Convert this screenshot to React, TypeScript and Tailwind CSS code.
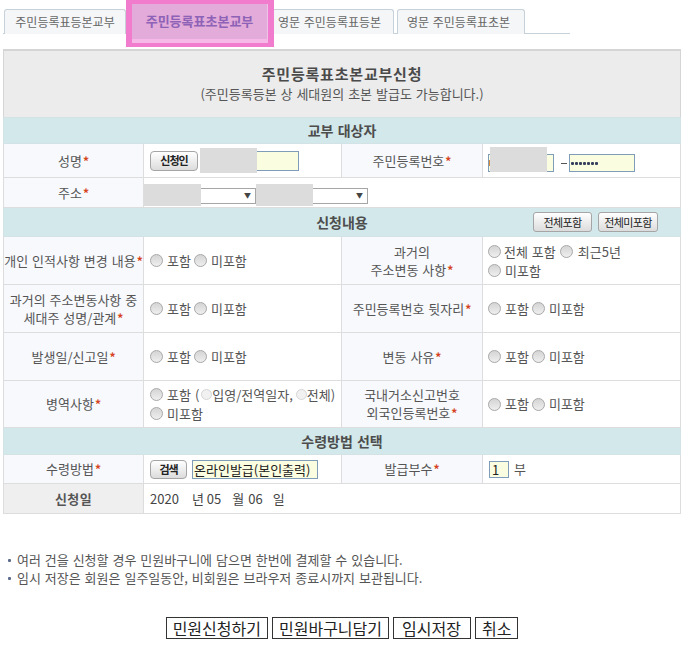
import React from "react";

const font = "font-['Noto_Sans_CJK_KR','Noto_Sans',sans-serif]";

function Star() {
  return <span className="text-[#d6431c] font-bold text-[12px] ml-[1px]">*</span>;
}

function Radio({ className = "" }: { className?: string }) {
  return (
    <span
      className={`inline-block shrink-0 w-[13px] h-[13px] rounded-full border border-[#a9a9a9] bg-gradient-to-b from-[#d4d4d4] to-[#efefef] ${className}`}
    />
  );
}

function SmallRadio({ className = "" }: { className?: string }) {
  return (
    <span
      className={`inline-block shrink-0 w-[11px] h-[11px] rounded-full border border-[#d6d6d6] bg-[#f1f1f1] ${className}`}
    />
  );
}

function Pair() {
  return (
    <div className="flex items-center">
      <Radio />
      <span className="ml-[4px]">포함</span>
      <Radio className="ml-[3px]" />
      <span className="ml-[4px]">미포함</span>
    </div>
  );
}

const labelTd = "bg-[#f7f9fd] text-center border border-[#dddddd] px-0 leading-[18px] whitespace-nowrap";
const val1Td = "bg-white border border-[#dddddd] pl-[6px]";
const val2Td = "bg-white border border-[#dddddd] pl-[5px]";
const secTd = "bg-[#d2e8ea] border border-[#d2e2e5] text-center font-bold text-[14px] text-[#4d4d4d]";
const smallBtn =
  "flex items-center justify-center border border-[#a5a5a5] rounded-[3px] bg-gradient-to-b from-white to-[#dcdcdc] text-[11px] text-[#222]";
const yellowInput = "border border-[#7f9db9] bg-[#fbfde0]";
const bigBtn = "h-[22px] border border-[#333] bg-white text-[16px] text-[#222] leading-[20px]";

export default function App() {
  return (
    <div className={`${font} w-[695px] h-[665px] bg-white text-[13px] text-[#555] [word-spacing:1px] pl-[3px]`}>
      {/* Tabs */}
      <div className="w-[567px] h-[34px] border-b border-[#c6d1d9] flex items-start text-[12px]">
        <div className="mt-[9px] ml-[1px] w-[122px] h-[25px] shrink-0 border border-b-0 border-[#c6d1d9] rounded-t-[3px] bg-[#f5f6f8] flex items-center justify-center text-[#666]">
          주민등록표등본교부
        </div>
        <div className="relative z-10 shrink-0 w-[148px] h-[47px] border-t-[4px] border-b-[4px] border-x-[6px] border-[#f17bcc] flex flex-col">
          <div className="flex-1 bg-[#e2abd9] flex items-center justify-center font-bold text-[13px] text-[#8d62b7] pb-[2px] border-r border-[#eec3e8]">
            주민등록표초본교부
          </div>
          <div className="h-[4px] bg-[#f6b8e7]" />
        </div>
        <div className="mt-[9px] w-[120px] h-[25px] shrink-0 border border-b-0 border-l-0 border-[#c6d1d9] rounded-tr-[3px] bg-[#f5f6f8] flex items-center pl-[4px] text-[#666]">
          영문 주민등록표등본
        </div>
        <div className="mt-[9px] ml-[3px] w-[128px] h-[25px] shrink-0 border border-b-0 border-[#c6d1d9] rounded-t-[3px] bg-[#f5f6f8] flex items-center pl-[9px] text-[#666]">
          영문 주민등록표초본
        </div>
      </div>

      {/* Panel */}
      <div className="mt-[15px] w-[678px]">
        <div className="h-[68px] bg-[#ececec] border-t-2 border-x border-[#d5d5d5] flex flex-col items-center pt-[13px]">
          <div className="text-[15px] font-bold text-[#4a4a4a] tracking-[0.8px] leading-[20px]">주민등록표초본교부신청</div>
          <div className="text-[13px] text-[#555] leading-[18px] mt-[1px]">(주민등록등본 상 세대원의 초본 발급도 가능합니다.)</div>
        </div>
        <table className="w-[678px] table-fixed border-collapse">
          <colgroup>
            <col className="w-[140px]" />
            <col className="w-[198px]" />
            <col className="w-[141px]" />
            <col />
          </colgroup>
          <tbody>
            <tr className="h-[26px]">
              <td colSpan={4} className={secTd}>교부 대상자</td>
            </tr>
            <tr className="h-[34px]">
              <td className={labelTd}>성명<Star /></td>
              <td className={val1Td}>
                <div className="flex items-center">
                  <button className={`${smallBtn} w-[48px] h-[20px] rounded-[4px] font-bold tracking-[-1px]`}>신청인</button>
                  <div className="relative ml-[2px]">
                    <div className={`${yellowInput} w-[99px] h-[20px]`} />
                    <div className="absolute left-0 top-[-3px] w-[57px] h-[25px] bg-[#dcdcdc]" />
                  </div>
                </div>
              </td>
              <td className={labelTd}>주민등록번호<Star /></td>
              <td className={val2Td}>
                <div className="flex items-center pt-[5px]">
                  <div className="relative">
                    <div className={`${yellowInput} w-[66px] h-[18px] flex items-center`}>
                      <span className="w-[2px] h-[6px] bg-[#d98a3a]" />
                    </div>
                    <div className="absolute left-[2px] top-[-7px] w-[57px] h-[25px] bg-[#dcdcdc]" />
                  </div>
                  <span className="ml-[7px] w-[6px] h-[1px] bg-[#555]" />
                  <div className={`${yellowInput} ml-[2px] w-[66px] h-[18px] flex items-center gap-[1px] pl-[1px]`}>
                    {[0, 1, 2, 3, 4, 5, 6].map((i) => (
                      <span key={i} className="w-[3px] h-[3px] rounded-[1px] bg-[#37405e]" />
                    ))}
                  </div>
                </div>
              </td>
            </tr>
            <tr className="h-[30px]">
              <td className={labelTd}>주소<Star /></td>
              <td colSpan={3} className="bg-white border border-[#dddddd] pl-[6px]">
                <div className="flex items-center pt-[6px]">
                  <div className="relative">
                    <div className="w-[106px] h-[16px] border border-[#a6a6a6] bg-white flex items-center justify-end pr-[4px] text-[7px] text-[#444]">▼</div>
                    <div className="absolute left-[-6px] top-[-4px] w-[57px] h-[22px] bg-[#dcdcdc]" />
                  </div>
                  <div className="relative">
                    <div className="w-[112px] h-[16px] border border-[#a6a6a6] bg-white flex items-center justify-end pr-[4px] text-[7px] text-[#444]">▼</div>
                    <div className="absolute left-0 top-[-4px] w-[57px] h-[22px] bg-[#dcdcdc]" />
                  </div>
                </div>
              </td>
            </tr>
            <tr className="h-[29px]">
              <td colSpan={4} className={secTd}>
                <div className="grid grid-cols-[1fr_auto_1fr] items-center">
                  <div />
                  <div>신청내용</div>
                  <div className="flex justify-end gap-[6px] pr-[22px] font-normal">
                    <button className={`${smallBtn} w-[59px] h-[20px] rounded-[2px] tracking-[-0.6px]`}>전체포함</button>
                    <button className={`${smallBtn} w-[60px] h-[20px] rounded-[2px] tracking-[-0.6px]`}>전체미포함</button>
                  </div>
                </div>
              </td>
            </tr>
            <tr className="h-[48px]">
              <td className={labelTd}>개인 인적사항 변경 내용<Star /></td>
              <td className={val1Td}><Pair /></td>
              <td className={labelTd}>과거의<br />주소변동 사항<Star /></td>
              <td className={val2Td}>
                <div className="leading-[19px]">
                  <div className="flex items-center">
                    <Radio />
                    <span className="ml-[3px]">전체 포함</span>
                    <Radio className="ml-[4px]" />
                    <span className="ml-[5px]">최근5년</span>
                  </div>
                  <div className="flex items-center">
                    <Radio />
                    <span className="ml-[4px]">미포함</span>
                  </div>
                </div>
              </td>
            </tr>
            <tr className="h-[48px]">
              <td className={labelTd}>과거의 주소변동사항 중<br />세대주 성명/관계<Star /></td>
              <td className={val1Td}><Pair /></td>
              <td className={labelTd}>주민등록번호 뒷자리<Star /></td>
              <td className={val2Td}><Pair /></td>
            </tr>
            <tr className="h-[48px]">
              <td className={labelTd}>발생일/신고일<Star /></td>
              <td className={val1Td}><Pair /></td>
              <td className={labelTd}>변동 사유<Star /></td>
              <td className={val2Td}><Pair /></td>
            </tr>
            <tr className="h-[47px]">
              <td className={labelTd}>병역사항<Star /></td>
              <td className={val1Td}>
                <div className="leading-[19px]">
                  <div className="flex items-center whitespace-nowrap">
                    <Radio />
                    <span className="ml-[4px]">포함</span>
                    <span className="ml-[4px]">(</span>
                    <SmallRadio className="ml-[2px]" />
                    <span>입영/전역일자,</span>
                    <SmallRadio className="ml-[3px]" />
                    <span>전체)</span>
                  </div>
                  <div className="flex items-center">
                    <Radio />
                    <span className="ml-[4px]">미포함</span>
                  </div>
                </div>
              </td>
              <td className={labelTd}>국내거소신고번호<br />외국인등록번호<Star /></td>
              <td className={val2Td}><Pair /></td>
            </tr>
            <tr className="h-[27px]">
              <td colSpan={4} className={secTd}>수령방법 선택</td>
            </tr>
            <tr className="h-[29px]">
              <td className={labelTd}>수령방법<Star /></td>
              <td className={val1Td}>
                <div className="flex items-center">
                  <button className={`${smallBtn} w-[37px] h-[19px] rounded-[4px] font-bold tracking-[-1px]`}>검색</button>
                  <div className={`${yellowInput} ml-[5px] w-[126px] h-[19px] flex items-center pl-[1px] text-[#222] leading-[17px] [word-spacing:0px]`}>
                    온라인발급(본인출력)
                  </div>
                </div>
              </td>
              <td className={labelTd}>발급부수<Star /></td>
              <td className={val2Td}>
                <div className="flex items-center">
                  <div className={`${yellowInput} ml-[1px] w-[20px] h-[17px] flex items-center pl-[2px] text-[#222] leading-[15px]`}>1</div>
                  <span className="ml-[5px]">부</span>
                </div>
              </td>
            </tr>
            <tr className="h-[30px]">
              <td className="bg-[#efefef] text-center border border-[#dddddd] font-bold text-[13px] text-[#555] tracking-[0.3px]">신청일</td>
              <td colSpan={3} className="bg-white border border-[#dddddd] pl-[6px]">
                <div className="flex items-center text-[#444] [word-spacing:0px]">
                  <span>2020</span>
                  <span className="ml-[13px]">년</span>
                  <span className="ml-[3px]">05</span>
                  <span className="ml-[11px]">월</span>
                  <span className="ml-[4px]">06</span>
                  <span className="ml-[10px]">일</span>
                </div>
              </td>
            </tr>
          </tbody>
        </table>
      </div>

      {/* Notes */}
      <div className="mt-[37px] leading-[18px] text-[#555]">
        <div className="flex items-center">
          <span className="ml-[5px] w-[3px] h-[3px] rounded-[1px] bg-[#5d6b8c]" />
          <span className="ml-[6px]">여러 건을 신청할 경우 민원바구니에 담으면 한번에 결제할 수 있습니다.</span>
        </div>
        <div className="flex items-center">
          <span className="ml-[5px] w-[3px] h-[3px] rounded-[1px] bg-[#5d6b8c]" />
          <span className="ml-[6px]">임시 저장은 회원은 일주일동안, 비회원은 브라우저 종료시까지 보관됩니다.</span>
        </div>
      </div>

      {/* Buttons */}
      <div className="mt-[30px] w-[678px] flex justify-center gap-[4px] [word-spacing:0px]">
        <button className={`${bigBtn} px-[6px]`}>민원신청하기</button>
        <button className={`${bigBtn} px-[6px]`}>민원바구니담기</button>
        <button className={`${bigBtn} pl-[8px] pr-[9px]`}>임시저장</button>
        <button className={`${bigBtn} px-[6px]`}>취소</button>
      </div>
    </div>
  );
}
